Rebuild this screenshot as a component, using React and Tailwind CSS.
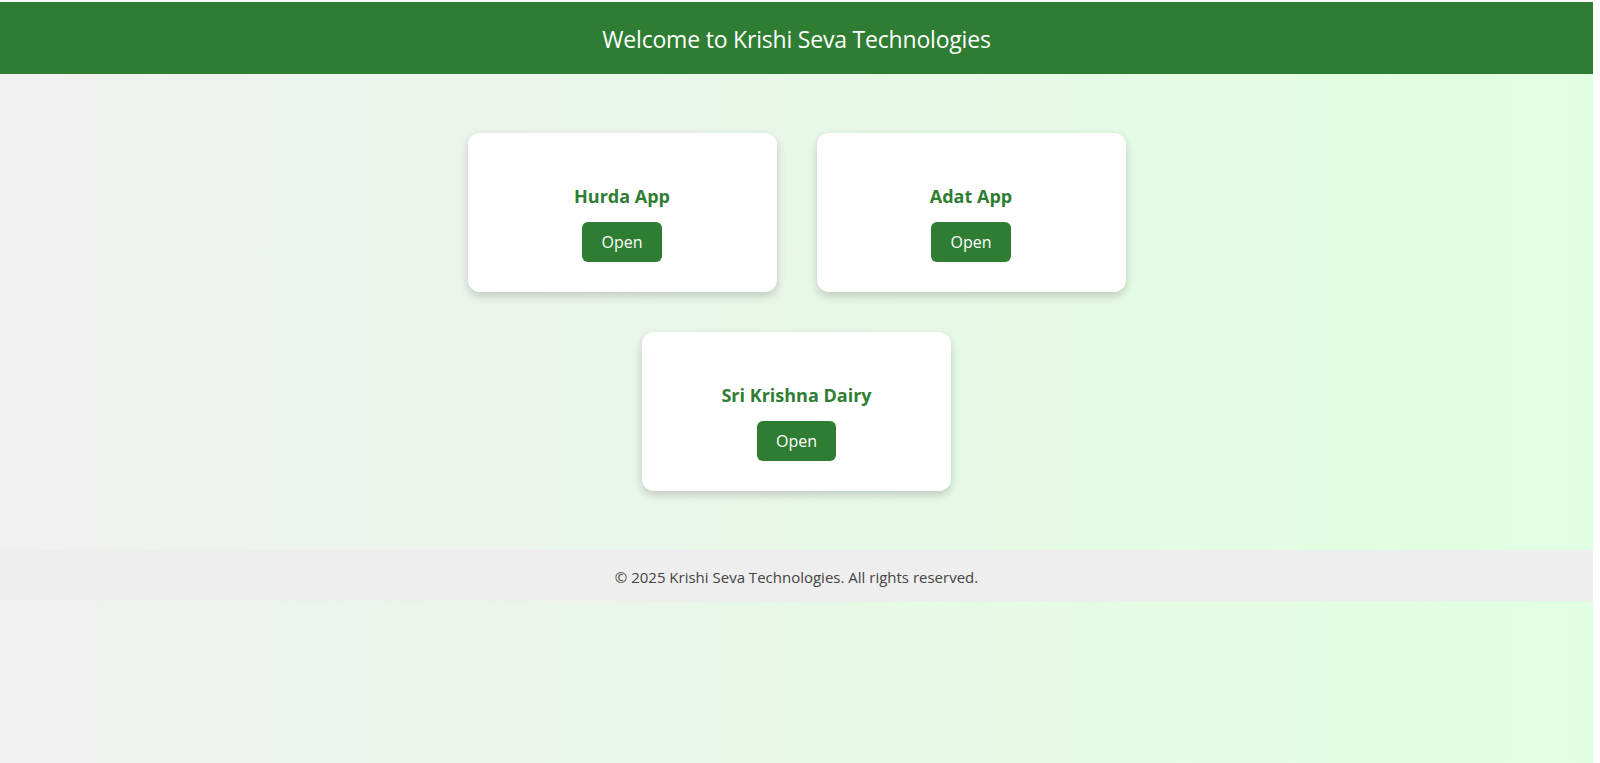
import React from 'react';

const APPS = ['Hurda App', 'Adat App', 'Sri Krishna Dairy'];

function AppCard({ name }) {
    return (
        <div className="w-[309px] h-[159px] m-[20px] px-[30px] py-[30px] bg-white rounded-[12px] shadow-[0_4px_10px_rgba(0,0,0,0.18)] flex flex-col items-center">
            <h3 className="mt-[21px] mb-[13px] text-[18px] leading-[25px] font-bold text-[#2e7d32]">{name}</h3>
            <button className="h-[40px] px-[19px] rounded-[6px] bg-[#2e7d32] text-white text-[16px]">Open</button>
        </div>
    );
}

export default function App() {
    return (
        <div className="w-full h-[763px] bg-white overflow-hidden font-['Open_Sans',sans-serif]">
            <div className="w-[1593px] mt-[2px] min-h-[761px] bg-gradient-to-r from-[#f0f0f0] to-[#e0ffe0]">
                <header className="h-[72px] bg-[#2e7d32] flex items-center justify-center">
                    <h1 className="text-white text-[23px] tracking-[-0.2px] mt-[2px]">Welcome to Krishi Seva Technologies</h1>
                </header>

                <main className="py-[39px] flex flex-wrap justify-center w-[730px] mx-auto">
                    {APPS.map((a) => (
                        <AppCard key={a} name={a} />
                    ))}
                </main>

                <footer className="h-[51px] bg-[#eeeeee] flex items-center justify-center">
                    <p className="text-[15px] text-[#444] leading-[22px] mt-[2px]">© 2025 Krishi Seva Technologies. All rights reserved.</p>
                </footer>
            </div>
        </div>
    );
}
